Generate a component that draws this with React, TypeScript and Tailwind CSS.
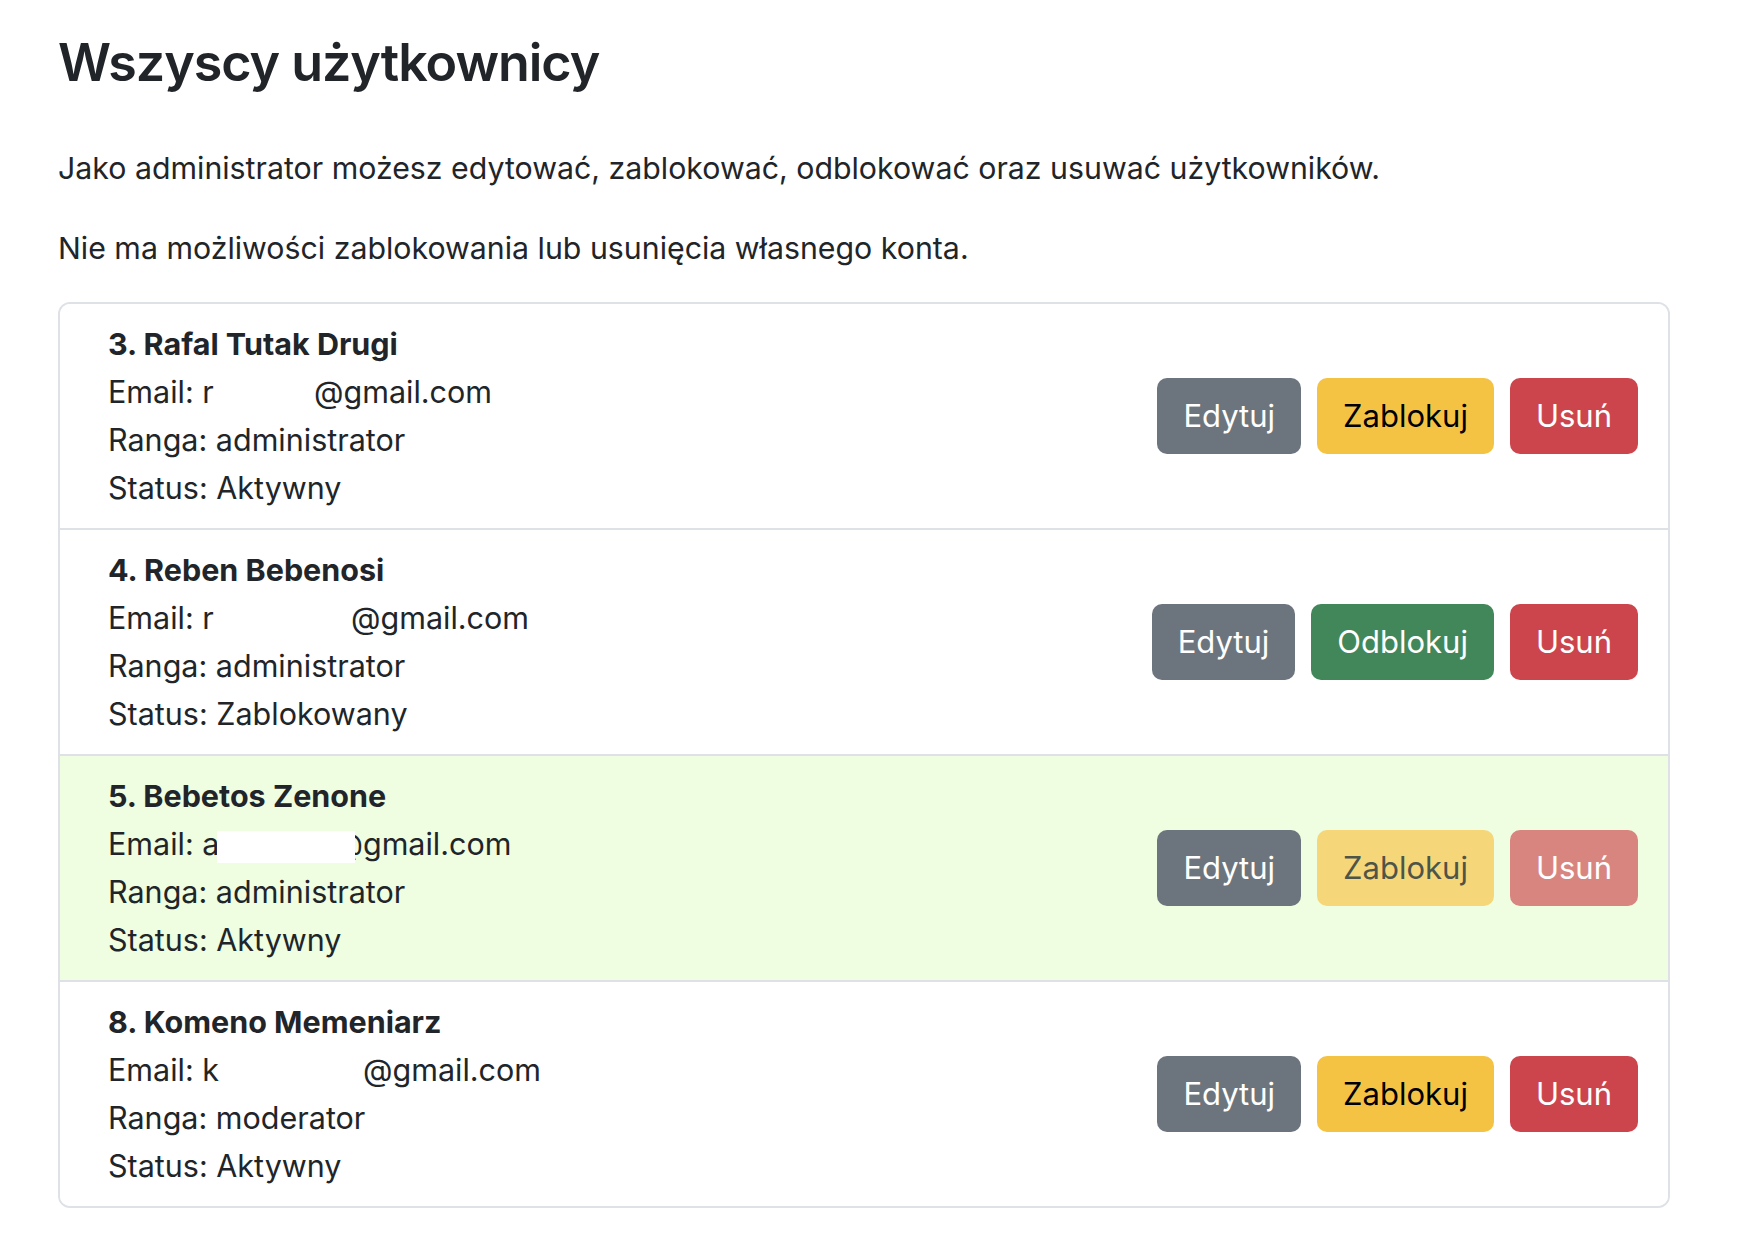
import React from 'react';

type User = {
  id: number;
  name: string;
  emailStart: string;
  gap: string;
  masked?: boolean;
  role: string;
  blocked: boolean;
  self?: boolean;
};

const users: User[] = [
  { id: 3, name: 'Rafal Tutak Drugi', emailStart: 'r', gap: 'w-[206px]', role: 'administrator', blocked: false },
  { id: 4, name: 'Reben Bebenosi', emailStart: 'r', gap: 'w-[243px]', role: 'administrator', blocked: true },
  { id: 5, name: 'Bebetos Zenone', emailStart: 'a', gap: 'w-[84px]', masked: true, role: 'administrator', blocked: false, self: true },
  { id: 8, name: 'Komeno Memeniarz', emailStart: 'k', gap: 'w-[255px]', role: 'moderator', blocked: false },
];

const App = () => {
  return (
    <div className="min-h-screen bg-white text-[#212529] font-['Inter','Liberation_Sans',sans-serif]">
      <div className="ml-[58px] w-[1612px] pt-[29px]">
        <h2 className="text-[52px] font-semibold tracking-[-0.02em] leading-[67px] mb-[48px]">Wszyscy użytkownicy</h2>
        <p className="text-[30.3px] leading-[48px] mb-[32px]">
          Jako administrator możesz edytować, zablokować, odblokować oraz usuwać użytkowników.
        </p>
        <p className="text-[30.3px] leading-[48px] mb-[30px]">
          Nie ma możliwości zablokowania lub usunięcia własnego konta.
        </p>

        {/* User list */}
        <div className="border-2 border-[#dee2e6] rounded-[12px] overflow-hidden">
          {users.map((user, index) => (
            <div
              key={user.id}
              className={`flex items-center justify-between pl-[48px] pr-[30px] py-[16px] ${
                index > 0 ? 'border-t-2 border-[#dee2e6]' : ''
              } ${user.self ? 'bg-[#effde1]' : 'bg-white'}`}
            >
              <div className="text-[30.5px] leading-[48px]">
                <div className="font-bold">
                  {user.id}. {user.name}
                </div>
                <div className="flex items-baseline">
                  {user.masked ? (
                    <>
                      <span>Email: {user.emailStart}</span>
                      <span className="relative z-10 inline-block w-[138px] h-[32px] bg-white self-center translate-y-[3px] ml-[-2px] mr-[-22px]"></span>
                    </>
                  ) : (
                    <span className={`inline-block ${user.gap}`}>Email: {user.emailStart}</span>
                  )}
                  <span>@gmail.com</span>
                </div>
                <div>Ranga: {user.role}</div>
                <div>Status: {user.blocked ? 'Zablokowany' : 'Aktywny'}</div>
              </div>

              <div className="flex items-center gap-[16px]">
                <button className="h-[76px] px-[26px] rounded-[10px] bg-[#6c757d] text-white text-[31px]">
                  Edytuj
                </button>
                {user.blocked ? (
                  <button className="h-[76px] px-[26px] rounded-[10px] bg-[#42875a] text-white text-[31px]">
                    Odblokuj
                  </button>
                ) : (
                  <button
                    className={`h-[76px] px-[26px] rounded-[10px] text-[31px] ${
                      user.self ? 'bg-[#f5d77a] text-[#4f5448]' : 'bg-[#f5c344] text-black'
                    }`}
                  >
                    Zablokuj
                  </button>
                )}
                <button
                  className={`h-[76px] px-[26px] rounded-[10px] text-white text-[31px] ${
                    user.self ? 'bg-[#d9857f]' : 'bg-[#cc454c]'
                  }`}
                >
                  Usuń
                </button>
              </div>
            </div>
          ))}
        </div>
      </div>
    </div>
  );
};

export default App;
